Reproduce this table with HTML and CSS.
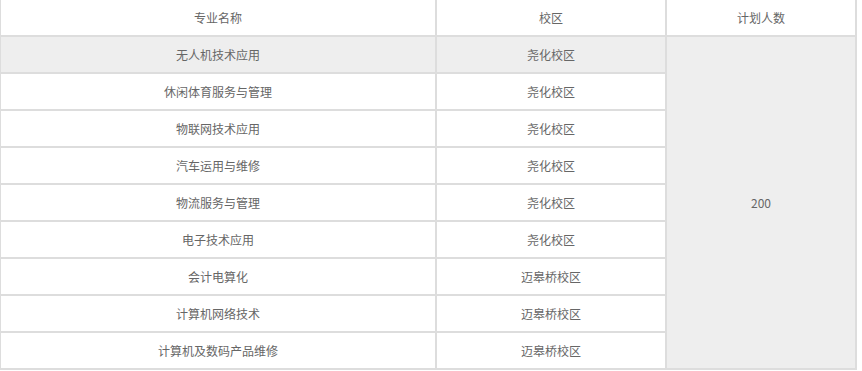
FILE: index.html
```html
<!DOCTYPE html>
<html lang="zh">
<head>
<meta charset="utf-8">
<link rel="stylesheet" href="styles.css">
</head>
<body>
<table class="plan">
  <colgroup>
    <col class="c1"><col class="c2"><col class="c3">
  </colgroup>
  <thead>
    <tr><th>专业名称</th><th>校区</th><th>计划人数</th></tr>
  </thead>
  <tbody>
    <tr class="hl"><td>无人机技术应用</td><td>尧化校区</td><td class="num" rowspan="9">200</td></tr>
    <tr><td>休闲体育服务与管理</td><td>尧化校区</td></tr>
    <tr><td>物联网技术应用</td><td>尧化校区</td></tr>
    <tr><td>汽车运用与维修</td><td>尧化校区</td></tr>
    <tr><td>物流服务与管理</td><td>尧化校区</td></tr>
    <tr><td>电子技术应用</td><td>尧化校区</td></tr>
    <tr><td>会计电算化</td><td>迈皋桥校区</td></tr>
    <tr><td>计算机网络技术</td><td>迈皋桥校区</td></tr>
    <tr><td>计算机及数码产品维修</td><td>迈皋桥校区</td></tr>
  </tbody>
</table>
</body>
</html>
```
FILE: styles.css
```css
html, body {
  margin: 0;
  padding: 0;
  background: #fff;
}
.plan {
  border-collapse: separate;
  border-spacing: 0;
  table-layout: fixed;
  width: 857px;
  border-left: 1px solid #ddd;
  font-family: "Microsoft YaHei", "Noto Sans CJK SC", sans-serif;
  font-size: 12px;
  color: #666;
}
.c1 { width: 436px; }
.c2 { width: 230px; }
.c3 { width: 190px; }
.plan th,
.plan td {
  height: 35px;
  padding: 0;
  text-align: center;
  vertical-align: middle;
  font-weight: normal;
  border-right: 2px solid #ddd;
  border-bottom: 2px solid #ddd;
  line-height: 16px;
}
.plan .hl td { background: #eee; }
.plan td.num { background: #eee; }
```
